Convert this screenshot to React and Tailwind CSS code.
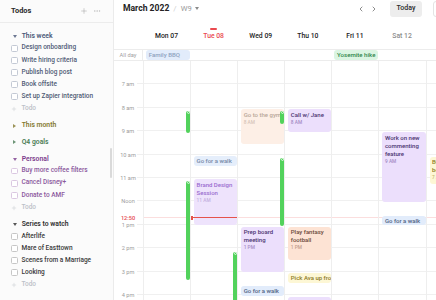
import React from "react";
import { Plus, MoreHorizontal, ChevronLeft, ChevronRight } from "lucide-react";

const sections = [
  {
    title: "This week", open: true,
    head: "text-[#4a5878]", item: "text-[#505b76]", box: "border-[#c3c9d4]",
    items: ["Design onboarding", "Write hiring criteria", "Publish blog post", "Book offsite", "Set up Zapier integration"],
  },
  { title: "This month", open: false, head: "text-[#84792f]" },
  { title: "Q4 goals", open: false, head: "text-[#4a7c55]" },
  {
    title: "Personal", open: true,
    head: "text-[#7b3d8d]", item: "text-[#8b589d]", box: "border-[#dac7e1]",
    items: ["Buy more coffee filters", "Cancel Disney+", "Donate to AMF"],
  },
  {
    title: "Series to watch", open: true,
    head: "text-[#2e2e2e]", item: "text-[#3a3a3a]", box: "border-[#c6c6c6]",
    items: ["Afterlife", "Mare of Easttown", "Scenes from a Marriage", "Looking"],
  },
];

const tones = {
  blue: { bg: "bg-[#e2ecfb]", title: "text-[#4f6383]", time: "text-[#8fa3c2]" },
  blueFaded: { bg: "bg-[#e5eefb]", title: "text-[#7488a6]", time: "text-[#a8b8cf]" },
  purple: { bg: "bg-[#ecdffc]", title: "text-[#4b3470]", time: "text-[#a48cc4]" },
  purpleFaded: { bg: "bg-[#eee3fc]", title: "text-[#9a6ccf]", time: "text-[#c3afe0]" },
  orange: { bg: "bg-[#fde3d4]", title: "text-[#6a4839]", time: "text-[#c29e8c]" },
  orangeFaded: { bg: "bg-[#fdefe6]", title: "text-[#b8a698]", time: "text-[#d6c5b9]" },
  yellow: { bg: "bg-[#fdf7d5]", title: "text-[#8c7a24]", time: "text-[#c9b870]" },
};

const days = [
  {
    label: "Mon 07",
    greens: [{ top: 49.5, h: 22 }, { top: 119.5, h: 99.5 }],
    events: [],
  },
  {
    label: "Tue 08", today: true,
    greens: [{ top: 190.7, h: 60 }],
    events: [
      { title: "Go for a walk", tone: "blueFaded", top: 94.7, h: 10.3, line: true },
      { title: "Brand Design Session", time: "11 AM", tone: "purpleFaded", top: 118.3, h: 45.5 },
    ],
  },
  {
    label: "Wed 09",
    greens: [{ top: 49.7, h: 13.3 }, { top: 96.7, h: 68.5 }],
    events: [
      { title: "Go to the gym", time: "8 AM", tone: "orangeFaded", top: 48, h: 35.3, nowrap: true },
      { title: "Prep board meeting", time: "1 PM", tone: "purple", top: 165.7, h: 45 },
      { title: "Go for a walk", tone: "blue", top: 224.7, h: 10, line: true },
    ],
  },
  {
    label: "Thu 10",
    greens: [],
    events: [
      { title: "Call w/ Jane", time: "8 AM", tone: "purple", top: 48, h: 22.7 },
      { title: "Play fantasy football", time: "1 PM", tone: "orange", top: 165.7, h: 33.3 },
      { title: "Pick Ava up from school", tone: "yellow", top: 212.3, h: 9.3, line: true },
      { title: "Team sync", time: "4 PM", tone: "purple", top: 235.7, h: 22 },
    ],
  },
  { label: "Fri 11", greens: [], events: [] },
  {
    label: "Sat 12", weekend: true,
    greens: [],
    events: [
      { title: "Work on new commenting feature", time: "9 AM", tone: "purple", top: 71.3, h: 69.7 },
      { title: "Go for a walk", tone: "blue", top: 154.7, h: 9.5, line: true },
    ],
  },
  {
    label: "Sun 13", weekend: true,
    greens: [],
    events: [{ title: "Buy coffee beans", time: "7 AM", tone: "yellow", top: 95.7, h: 27 }],
  },
];

const hours = ["7 am", "8 am", "9 am", "10 am", "11 am", "Noon", "1 pm", "2 pm", "3 pm", "4 pm"];
const NOW = 156.3;

function Caret({ open }) {
  return open ? (
    <svg width="4" height="3" viewBox="0 0 4 3" className="fill-current opacity-80"><polygon points="0,0 4,0 2,3" /></svg>
  ) : (
    <svg width="3" height="4" viewBox="0 0 3 4" className="fill-current opacity-80"><polygon points="0,0 3,2 0,4" /></svg>
  );
}

function Section({ s, first }) {
  return (
    <div className={first ? "" : "mt-[4.7px]"}>
      <div className={`flex items-center h-[12.1px] ${s.head}`}>
        <span className="w-[7px] flex justify-center"><Caret open={s.open} /></span>
        <span className="ml-[3.7px] text-[6.8px] font-semibold">{s.title}</span>
      </div>
      {s.open && s.items.map((t) => (
        <div key={t} className="flex items-center h-[12.1px]">
          <span className={`w-[6.5px] h-[6.5px] rounded-[1.5px] border bg-white ${s.box}`} />
          <span className={`ml-[4px] text-[6.5px] font-medium whitespace-nowrap ${s.item}`}>{t}</span>
        </div>
      ))}
      {s.open && (
        <div className="flex items-center h-[12.1px] text-[#bcc0c8]">
          <span className="w-[6.5px] flex justify-center"><Plus size={6} strokeWidth={1.6} /></span>
          <span className="ml-[4px] text-[6.5px] font-medium">Todo</span>
        </div>
      )}
    </div>
  );
}

function Event({ e }) {
  const t = tones[e.tone];
  if (e.line) {
    return (
      <div className={`absolute left-[3px] right-0 rounded-[3px] pl-[2.5px] flex items-center overflow-hidden whitespace-nowrap ${t.bg}`} style={{ top: e.top, height: e.h }}>
        <span className={`text-[6px] font-medium ${t.title}`}>{e.title}</span>
      </div>
    );
  }
  return (
    <div className={`absolute left-[3px] right-0 rounded-[3px] pl-[2.5px] pr-[1px] pt-[1.5px] overflow-hidden ${t.bg}`} style={{ top: e.top, height: e.h }}>
      <div className={`text-[6px] leading-[8px] font-medium ${e.nowrap ? "whitespace-nowrap" : ""} ${t.title}`}>{e.title}</div>
      <div className={`text-[4.8px] leading-[7px] font-medium ${t.time}`}>{e.time}</div>
    </div>
  );
}

function Green({ g }) {
  return (
    <div className="absolute right-0 w-[4px] rounded-full bg-[#52d25c] z-10" style={{ top: g.top, height: g.h }}>
      <div className="mx-auto mt-[0.5px] w-[3px] h-[3px] rounded-full border-[0.8px] border-white/70" />
    </div>
  );
}

export default function App() {
  return (
    <div className="flex w-[436px] h-[300px] overflow-hidden bg-white font-['Roboto','Liberation_Sans',sans-serif] antialiased">
      <aside className="relative w-[114px] shrink-0 border-r border-[#ebebeb] bg-[#fbfbfb]">
        <div className="h-[23px] border-b border-[#ececec] flex items-center pl-[11px] pr-[12px]">
          <span className="text-[7.4px] font-bold text-[#2a2a2a]">Todos</span>
          <span className="ml-auto text-[#9d9d9d]"><Plus size={8} strokeWidth={1.5} /></span>
          <span className="ml-[5px] text-[#b0b0b0]"><MoreHorizontal size={8} strokeWidth={1.5} /></span>
        </div>
        <div className="pt-[7.2px] pl-[11px]">
          {sections.map((s, i) => <Section key={s.title} s={s} first={i === 0} />)}
        </div>
        <div className="absolute right-[1.5px] top-[148px] w-[2px] h-[30px] rounded-full bg-[#dadada]" />
      </aside>

      <main className="flex-1 min-w-0 flex flex-col overflow-hidden">
        <div className="h-[17px] shrink-0 flex items-center pl-[9px]">
          <span className="text-[8.6px] font-bold text-[#232323]">March 2022</span>
          <span className="ml-[4px] text-[8px] text-[#d0d0d0]">/</span>
          <span className="ml-[4px] text-[7.6px] text-[#9a9a9a]">W9</span>
          <svg width="4" height="3" viewBox="0 0 4 3" className="ml-[3px] fill-[#8a8a8a]"><polygon points="0,0 4,0 2,3" /></svg>
          <div className="ml-auto flex items-center">
            <span className="w-[8px] flex justify-center text-[#555]"><ChevronLeft size={8} strokeWidth={2} /></span>
            <span className="ml-[5.3px] w-[8px] flex justify-center text-[#555]"><ChevronRight size={8} strokeWidth={2} /></span>
            <span className="ml-[11.7px] w-[32px] h-[16px] rounded-[3px] bg-[#ededed] flex items-center justify-center text-[7px] font-medium text-[#2a2a2a]">Today</span>
            <span className="ml-[10.7px] -mr-[16.7px] w-[20px] h-[16px] rounded-[3px] border border-[#e4e4e4] bg-white shrink-0" />
          </div>
        </div>

        <div className="h-[32px] shrink-0 flex">
          <div className="w-[29px] shrink-0" />
          {days.map((d) => (
            <div key={d.label} className="w-[47.1px] shrink-0 flex flex-col items-center pt-[11px]">
              <div className={`w-[7px] h-[1.5px] rounded-full ${d.today ? "bg-[#ea4a4f]" : "bg-transparent"}`} />
              <div className={`mt-[2.5px] text-[6.8px] leading-[8px] font-medium whitespace-nowrap ${d.today ? "text-[#ea4a4f]" : d.weekend ? "text-[#8c8c8c]" : "text-[#222]"}`}>{d.label}</div>
            </div>
          ))}
        </div>

        <div className="h-[12px] shrink-0 flex border-y border-[#ececec]">
          <div className="w-[29px] shrink-0 border-r border-[#ececec] flex items-center justify-center text-[5.7px] text-[#a0a0a0]">All day</div>
          {days.map((d, i) => (
            <div key={d.label} className="w-[47.1px] shrink-0 flex items-center">
              {i === 0 && <div className="ml-[2.7px] flex-1 h-[10.5px] rounded-[3px] bg-[#e2ecfb] px-[3px] flex items-center whitespace-nowrap overflow-hidden text-[6.1px] font-medium text-[#8ea2bf]">Family BBQ</div>}
              {i === 4 && <div className="ml-[2.7px] flex-1 h-[10px] rounded-[3px] bg-[#dbf5e2] px-[3px] flex items-center whitespace-nowrap overflow-hidden text-[6.1px] font-medium text-[#2f8549]">Yosemite hike</div>}
            </div>
          ))}
        </div>

        <div className="flex-1 flex overflow-hidden">
          <div className="relative w-[29px] shrink-0">
            {hours.map((h) => (
              <div key={h} className="relative h-[23.4px]">
                <span className="absolute bottom-0 left-0 right-[1px] translate-y-1/2 text-center text-[5.6px] leading-[7px] text-[#9c9c9c]">{h}</span>
                <div className="absolute bottom-0 right-0 w-[6px] h-px bg-[#efefef]" />
              </div>
            ))}
            <span className="absolute left-0 right-[1px] -translate-y-1/2 text-center text-[5.6px] leading-[7px] font-medium text-[#e5484d] bg-white" style={{ top: NOW + 0.5 }}>12:50</span>
          </div>
          {days.map((d) => (
            <div key={d.label} className="relative w-[47.1px] shrink-0 border-l border-[#eeeeee]">
              {hours.map((h) => <div key={h} className="h-[23.4px] border-b border-[#f0f0f0]" />)}
              <div className={`absolute left-0 right-0 h-px ${d.today ? "bg-[#e5534b] z-20" : "bg-[#fbdede]"}`} style={{ top: NOW }} />
              {d.today && <div className="absolute left-0 w-[2px] h-[4px] bg-[#e5534b] z-20" style={{ top: NOW - 1.5 }} />}
              {d.events.map((e) => <Event key={e.title + e.top} e={e} />)}
              {d.greens.map((g) => <Green key={g.top} g={g} />)}
            </div>
          ))}
        </div>
      </main>
    </div>
  );
}
